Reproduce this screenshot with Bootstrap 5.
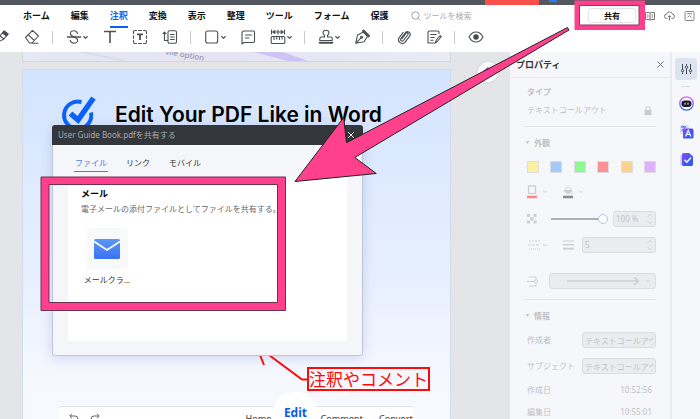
<!DOCTYPE html>
<html lang="ja">
<head>
<meta charset="utf-8">
<meta name="viewport" content="width=device-width, initial-scale=1">
<title>User Guide Book.pdf</title>
<link href="https://cdn.jsdelivr.net/npm/bootstrap@5.3.0/dist/css/bootstrap.min.css" rel="stylesheet">
<style>
body{font-family:"Noto Sans","Noto Sans CJK JP",sans-serif;font-size:8px;line-height:12px;color:#222;background:#fff}
svg{display:block;flex:none}
button{background:none;border:0;padding:0;color:inherit;line-height:inherit;display:flex;align-items:center}
a{text-decoration:none;color:inherit}
.ico{fill:none;stroke:#4c4f54;stroke-width:1.1;stroke-linecap:round;stroke-linejoin:round}
.strip{height:5px;background:#535760;padding-left:485px;gap:10px}
.strip-red{width:54px;background:#fb4f4b}
.strip-blue{width:8px;background:#2a7bf6;height:2px}
.menubar{height:21px;padding:0 5px 0 23px}
.menu-tabs{gap:21px;font-size:9px;font-weight:700;color:#111}
.menu-tabs a{height:20px;line-height:20px;white-space:nowrap}
.menu-tabs a.active{color:#0a62f5;box-shadow:0 2px #0a62f5}
.finder{margin-left:22px;gap:3px;color:#a4a6aa}
.finder input{border:0;padding:0;width:54px;font-size:8px;background:none;outline:0}
.finder input::placeholder{color:#a9abaf;opacity:1}
.share-btn{width:48px;height:15px;border:1px solid #e3e4e8;border-radius:3px;font-size:8px;font-weight:700;color:#111;background:#fff}
.top-icons{gap:9px;margin-left:9px}
.toolbar-row{height:26px;gap:14px;margin-left:-6px;padding-bottom:4px}
.toolbar-row button{gap:1px}
.vsep{width:1px;height:13px;background:#c9cacd;margin:0 -1px 0 -2px;flex:none}
.workspace{background:#e4e5e9;padding:0 59px 0 22px}
.page-prev{height:10px;background:linear-gradient(90deg,#e5e9f3,#e5e3f4 45%,#e9ebf4);border:1px solid #d5d8e2;border-top:0}
.page-main{margin-top:7px;background:linear-gradient(#d3e4fe,#e8f0ff 62%,#f6f8fe 90%,#f8f9fe);border:1px solid #d3dcec;border-bottom:0}
.hero{padding:25px 0 0 37px;gap:18px}
.hero h1{font:600 21px/40px Inter,sans-serif;color:#000;margin:0;white-space:nowrap}
.doc-bar{margin:0 37px 0 36px;height:13px;background:#fff;border-radius:4px 4px 0 0;border-top:1px solid #dfe3ee;font:500 9px/24px "Noto Sans",sans-serif;color:#555}
.doc-hist{gap:11px;padding:6px 0 0 10px}
.doc-nav{height:12px}
.doc-edit{width:46px;height:46px;border-radius:50%;background:#fff;color:#0a5cf0;font:700 12px/26px "Noto Sans",sans-serif;margin:-15px 2px 0 1px;padding-top:8px;justify-content:center;align-items:flex-start}
.callout-note{left:307px;top:367px;border:2px solid #ff0a0a;color:#ff0a0a;font:17px/20px "Noto Sans CJK JP",sans-serif;white-space:nowrap}
.overlay{left:0;top:0;pointer-events:none}
.ai-btn{left:478px;top:62px;width:20px;height:20px;border-radius:50%;background:#fff;box-shadow:0 0 3px #c9ccd5;justify-content:center}
.share-dialog{left:52px;top:125px;width:311px;background:#f5f6fa;border:1px solid #bfc5d6;border-radius:3px;box-shadow:0 2px 12px rgba(70,90,160,.2)}
.dialog-head{height:20px;margin:-1px -1px 0;background:#33373b;color:#a7a9ac;padding:0 8px 0 6px;border-radius:3px 3px 0 0}
.dialog-tabs{gap:17px;padding:9px 21px 0}
.dialog-tabs a{height:17px;line-height:17px;color:#333;padding:0 1px}
.dialog-tabs a.active{color:#3b7ff5;box-shadow:0 1px #3b7ff5}
.share-sheet{margin:6px 15px 14px;padding:10px 13px 0;background:#fff;border-radius:3px;height:164px}
.share-sheet h2{font-size:9px;line-height:14px;font-weight:700;margin:0;color:#000}
.share-sheet p{color:#66686c;line-height:16px;margin:0 0 11px;white-space:nowrap}
.mail-tile{width:52px;flex-direction:column;gap:5px;color:#333}
.mail-pic{width:41px;height:41px;background:#f8f9fa;border-radius:4px}
.props{width:162px;background:#f6f7fb;border-right:2px solid #eaebf1;color:#bfc0c5}
.props-head{height:26px;border-bottom:1px solid #e9eaf0;padding:0 6px;font-size:9px;font-weight:700;color:#333}
.props-body{padding:8px 14px 0 17px}
.gap-s{margin-top:6px}
.gap-m{margin-top:10px}
.gap-l{margin-top:12px}
.gap-xl{margin-top:20px}
.rule{height:1px;background:#e4e5ea;margin-left:-3px}
.sect{gap:4px;font-weight:700;margin-left:-2px}
.swatch{width:12px;height:12px;border:1px solid #dcdde3;padding:0}
.sw1{background:#fbf1a0}.sw2{background:#a5c8fd}.sw3{background:#90f794}.sw4{background:#fb9192}.sw5{background:#fcd28f}.sw6{background:#dfb0fc}
.pale{fill:none;stroke:#cdced3;stroke-width:1}
.field{background:#ebecf0;border:1px solid #dbdce1;border-radius:3px;height:16px;color:#c3c4c9;font-size:8px;line-height:12px;padding:0 2px;width:74px}
.field.narrow{width:43px}
.field input{border:0;background:none;outline:0;padding:0;color:inherit;min-width:0;width:28px}
input.field{outline:0}
.arrow-select{position:relative;width:107px}
.arrow-select select{appearance:none;width:100%;height:16px;background:#ebecf0;border:1px solid #dbdce1;border-radius:3px;color:transparent;font-size:8px;display:block}
.arrow-select svg{position:absolute;left:18px;top:2px;pointer-events:none}
.opacity-range{appearance:none;width:57px;height:12px;background:none;margin:0}
.opacity-range::-webkit-slider-runnable-track{height:2px;background:#aeb0b4}
.opacity-range::-webkit-slider-thumb{appearance:none;width:10px;height:10px;margin-top:-4px;border-radius:50%;background:#fff;border:1px solid #a9c7f8}
.rail{width:28px;background:#f6f7fb;padding-top:6px}
.rail-on{width:22px;height:22px;border-radius:3px;background:#dde4f0;justify-content:center}
.rail-line{width:8px;height:1px;background:#dadce2;margin:6px 0 9px}
.rail-tools{gap:13px}
</style>
<script src="https://cdn.jsdelivr.net/npm/bootstrap@5.3.0/dist/js/bootstrap.bundle.min.js"></script>
</head>
<body class="vh-100 overflow-hidden d-flex flex-column position-relative">
<div class="strip d-flex flex-shrink-0"><div class="strip-red"></div><div class="strip-blue"></div></div>

<header class="flex-shrink-0">
  <div class="menubar d-flex align-items-center">
    <nav class="menu-tabs d-flex">
      <a href="#">ホーム</a><a href="#">編集</a><a href="#" class="active">注釈</a><a href="#">変換</a><a href="#">表示</a><a href="#">整理</a><a href="#">ツール</a><a href="#">フォーム</a><a href="#">保護</a>
    </nav>
    <label class="finder d-flex align-items-center">
      <svg width="10" height="10" fill="none" stroke="#a4a6aa"><circle cx="4.500" cy="4.500" r="3.700"/><path d="M7.200 7.200 9.500 9.500"/></svg>
      <input type="text" placeholder="ツールを検索" aria-label="ツールを検索">
    </label>
    <button class="share-btn ms-auto justify-content-center">共有</button>
    <div class="top-icons d-flex align-items-center">
      <button aria-label="ガイド"><svg width="10" height="10" fill="none" stroke="#777"><path d="M.5 1.500h3.500l1 .8 1-.8h3.500v7H6l-1 .8-1-.8H.5zM5 2.500v6.500M2 4h1.500M2 6h1.500M6.500 4H8M6.500 6H8"/></svg></button>
      <button aria-label="アップロード"><svg width="11" height="10" fill="none" stroke="#777"><path d="M3.500 7.500H2.800a2.200 2.200 0 0 1-.2-4.400 3 3 0 0 1 5.800 0 2.200 2.200 0 0 1-.2 4.400h-.7M5.500 9.500V4.700M3.900 6.200l1.600-1.600 1.600 1.600"/></svg></button>
      <button aria-label="折りたたむ"><svg width="11" height="10" fill="none" stroke="#888"><rect x="1" y=".5" width="9" height="9" rx="1"/><path d="M3 2.700h5M3.500 6.500l2-2 2 2"/></svg></button>
    </div>
  </div>
  <div class="toolbar-row d-flex align-items-center">
    <button aria-label="ハイライト"><svg class="ico" width="16" height="16"><path d="M3 13.500 6 7l4-5 4 3-4 5zM6 7l4 3"/><path d="m10 2 4 3-1.500 2-4-3z" fill="#45484d"/></svg></button>
    <button aria-label="消しゴム"><svg class="ico" width="16" height="16"><path d="M1.500 8.500 8.500 1.300 14.500 7l-6.500 7H5.500zM4.300 5.800l6 5.700M8 14.200h6"/></svg></button>
    <span class="vsep"></span>
    <button aria-label="取り消し線"><svg class="ico" width="16" height="16"><path d="M1.500 8h13" stroke-width="1.600"/><path d="M11.500 4.500C11 2.500 9.500 1.700 8 1.700c-2.200 0-3.600 1.300-3.600 2.800C4.400 6 5.500 7 8 8c2.300 1 3.700 1.800 3.700 3.300S10 14.200 8 14.200c-2 0-3.500-1-3.800-3"/></svg><svg class="ico" width="5" height="5"><path d="M.7 1.500 2.500 3.300 4.300 1.500"/></svg></button>
    <button aria-label="テキスト"><svg class="ico" width="16" height="16"><path d="M2 2.500h12M8 3v11" stroke-width="1.600" stroke-linecap="butt"/></svg></button>
    <button aria-label="テキストボックス"><svg class="ico" width="16" height="16"><path d="M1.500 4.500V3a1.500 1.500 0 0 1 1.500-1.500h1.500M6.500 1.500h3M11.500 1.500H13A1.500 1.500 0 0 1 14.500 3v1.500M14.500 11.500V13a1.500 1.500 0 0 1-1.500 1.500h-1.500M9.500 14.500h-3M4.500 14.500H3A1.500 1.500 0 0 1 1.500 13v-1.500M1.500 6.800v2.400M14.500 6.800v2.400"/><path d="M5 5.300h6M8 5.500V11" stroke-width="1.800" stroke-linecap="butt"/></svg></button>
    <button aria-label="コールアウト"><svg class="ico" width="16" height="16"><path d="M7.500 1.700H13A1.500 1.500 0 0 1 14.500 3.200v9.600a1.500 1.500 0 0 1-1.500 1.500H7.500A1.500 1.500 0 0 1 6 12.800V3.200a1.500 1.500 0 0 1 1.500-1.500zM8.500 5.500h3.700M8.500 8h3.700M8.500 10.500h3.700M5.500 11.500H2.500V3M1 4.700 2.500 3 4 4.700"/></svg></button>
    <span class="vsep"></span>
    <button aria-label="図形"><svg class="ico" width="16" height="16"><rect x="1.700" y="2" width="12" height="12" rx="2"/></svg><svg class="ico" width="5" height="5"><path d="M.7 1.500 2.500 3.300 4.300 1.500"/></svg></button>
    <button aria-label="ノート"><svg class="ico" width="16" height="16"><path d="M4 2h9.500a1 1 0 0 1 1 1v9a1.500 1.500 0 0 1-1.500 1.500H4L2 15V4a2 2 0 0 1 2-2zM5.500 6h6M5.500 9H9"/></svg></button>
    <button aria-label="測定"><svg class="ico" width="16" height="16"><path d="M1.500 1v4M14.500 1v4M8 1v4M2.500 3h11M5 1.500 3 3l2 1.500M11 1.500 13 3l-2 1.500"/><rect x="1.200" y="7.500" width="13.600" height="7" rx="1"/><path d="M4 8v2.500M6.700 8v2M9.400 8v2.500M12 8v2"/></svg><svg class="ico" width="5" height="5"><path d="M.7 1.500 2.500 3.300 4.300 1.500"/></svg></button>
    <span class="vsep"></span>
    <button aria-label="スタンプ"><svg class="ico" width="16" height="16"><path d="M6.500 8V6.500C5.500 5.500 5 4.800 5 3.800A2.900 2.900 0 0 1 8 1.200a2.900 2.900 0 0 1 3 2.600c0 1-.5 1.700-1.500 2.700V8h3.200a1.500 1.500 0 0 1 1.500 1.500V11.500H1.800V9.500A1.500 1.500 0 0 1 3.300 8z"/><path d="M1.700 13.800h12.600" stroke-width="2"/></svg><svg class="ico" width="5" height="5"><path d="M.7 1.500 2.500 3.300 4.300 1.500"/></svg></button>
    <button aria-label="署名"><svg class="ico" width="16" height="16"><path d="M1.700 14.300 3.500 6l6-3 4 4.200-3.300 5.500zM2 14l5-5.200"/><circle cx="7.500" cy="8.300" r="1"/><path d="m9.500 2 5 5" stroke-width="2.800"/></svg></button>
    <span class="vsep"></span>
    <button aria-label="添付"><svg class="ico" width="16" height="16"><path d="m5 9.500 4.500-6a2.800 2.800 0 0 1 4.400 3.300l-5 6.500a3.700 3.700 0 0 1-5.800-4.500l4-5.300M5 9.500a1.600 1.600 0 0 0 2.500 2L12 5.500a1.200 1.200 0 0 0-1.900-1.400L6.200 9.500" stroke-width="1.200"/></svg></button>
    <button aria-label="注釈管理"><svg class="ico" width="16" height="16"><path d="M13 4.500V3a1 1 0 0 0-1-1H3.500a1.500 1.500 0 0 0-1.500 1.500V14h7M4.700 5.500h5.500M4.700 8.500h3.500M4.700 11.200H7M9.500 13.800l.5-2.300 4-5 1.300 1-4 5z"/></svg></button>
    <span class="vsep"></span>
    <button aria-label="表示切替"><svg class="ico" width="16" height="16"><path d="M1 8c3.500-6.700 10.500-6.700 14 0-3.500 6.700-10.500 6.700-14 0z"/><circle cx="8" cy="8" r="2.200" fill="#45484d"/></svg></button>
  </div>
</header>

<main class="d-flex flex-grow-1 overflow-hidden">
  <section class="workspace flex-grow-1 d-flex flex-column overflow-hidden">
    <div class="page-prev flex-shrink-0">
      <svg width="100%" height="9"><path d="M65 0 105 9H98L55 0z" fill="#d8dbe6"/><path d="M230 0h30l25 9h-20z" fill="#cfc3f5"/><text x="142" y="2" font-size="8" fill="#8c8ea3" transform="rotate(10 142 2)">vile option</text></svg>
    </div>
    <article class="page-main flex-grow-1 d-flex flex-column">
      <div class="hero d-flex align-items-start">
        <svg width="37" height="37" fill="none" stroke="#0b62f8" stroke-width="4"><path d="M21.500 7.200A13.600 13.600 0 1 0 31 17.500"/><path d="m10.500 18.500 7.500 6.500L33.500 3" stroke-width="5.500"/></svg>
        <h1>Edit Your PDF Like in Word</h1>
      </div>
      <div class="doc-bar mt-auto d-flex justify-content-between">
        <div class="doc-hist d-flex">
          <svg width="10" height="9" fill="none" stroke="#666"><path d="M3 .8.8 3 3 5.200M1 3h5a3 3 0 0 1 3 3v3"/></svg>
          <svg width="10" height="9" fill="none" stroke="#666"><path d="M7 .8 9.200 3 7 5.200M9 3H4a3 3 0 0 0-3 3v3"/></svg>
        </div>
        <div class="doc-nav d-flex">
          <a href="#">Home</a><a href="#" class="doc-edit d-flex">Edit</a><a href="#" class="me-3">Comment</a><a href="#">Convert</a>
        </div>
      </div>
    </article>
  </section>

  <aside class="props flex-shrink-0">
    <div class="props-head d-flex align-items-center justify-content-between">プロパティ
      <button aria-label="閉じる"><svg width="7" height="7" stroke="#70768c"><path d="m.5.5 6 6M6.500.5l-6 6"/></svg></button></div>
    <div class="props-body">
      <div class="fw-bold">タイプ</div>
      <div class="gap-s d-flex align-items-center justify-content-between pe-1">テキストコールアウト<svg width="8" height="9"><path d="M2 4V2.500a2 2 0 0 1 4 0V4" fill="none" stroke="#c9cacf"/><rect x=".5" y="4" width="7" height="5" fill="#c9cacf"/></svg></div>
      <div class="rule gap-m"></div>
      <div class="sect gap-m d-flex align-items-center"><svg width="5" height="4"><path d="M.5 0h4L2.500 3z" fill="#c6c7cc"/></svg>外観</div>
      <div class="gap-l d-flex justify-content-between">
        <button class="swatch sw1" aria-label="黄"></button><button class="swatch sw2" aria-label="青"></button><button class="swatch sw3" aria-label="緑"></button><button class="swatch sw4" aria-label="赤"></button><button class="swatch sw5" aria-label="橙"></button><button class="swatch sw6" aria-label="紫"></button>
      </div>
      <div class="gap-l d-flex">
        <button class="me-3" aria-label="線の色"><svg class="pale" width="20" height="14"><rect x="1.500" y="1" width="7" height="7.500" stroke-width="1.300"/><path d="M0 12h10" stroke="#fa8585" stroke-width="2.500"/><path d="m16 5.500 2 2 2-2"/></svg></button>
        <button aria-label="塗りの色"><svg class="pale" width="20" height="14"><path d="M1 5.500 5 1.500 9 5.500 5 9z"/><path d="M1 5.500h8L5 9zM9 6.500v3" fill="#cdced3"/><path d="M0 12h10" stroke="#8f8788" stroke-width="2.500"/><path d="m16 5.500 2 2 2-2"/></svg></button>
      </div>
      <div class="gap-l d-flex align-items-center justify-content-between">
        <svg width="10" height="10" fill="#cdced3"><path d="M0 0h3v3H0zM6.500 0h3v3h-3zM3.200 3.200h3.300v3.300H3.200zM0 6.500h3v3H0zM6.500 6.500h3v3h-3z"/></svg>
        <input type="range" class="opacity-range ms-2" min="0" max="100" value="100" aria-label="不透明度">
        <div class="field narrow d-flex align-items-center justify-content-between"><input type="text" value="100 %" aria-label="不透明度の値"><svg class="pale" width="6" height="12"><path d="m1 3.500 2-2 2 2M1 8.500l2 2 2-2"/></svg></div>
      </div>
      <div class="gap-m d-flex align-items-center">
        <button class="me-3" aria-label="線種"><svg class="pale" width="20" height="10"><path d="M2 1h11" stroke-dasharray="2 1"/><path d="M1 5h12" stroke-dasharray="3 1"/><path d="M2 9h11" stroke-dasharray="1 1"/><path d="m16 4 2 2 2-2"/></svg></button>
        <svg class="pale" width="11" height="10"><path d="M0 1h11"/><path d="M0 4.700h11" stroke-width="1.500"/><path d="M0 8.700h11" stroke-width="2"/></svg>
        <div class="field d-flex align-items-center justify-content-between ms-auto"><input type="text" value="5" aria-label="太さ"><svg class="pale" width="6" height="12"><path d="m1 3.500 2-2 2 2M1 8.500l2 2 2-2"/></svg></div>
      </div>
      <div class="gap-xl d-flex align-items-center justify-content-between">
        <svg class="pale" width="12" height="11"><path d="M2 1h7v2.500M2 10h7V7.500M0 5.500h7"/><circle cx="9" cy="5.500" r="1.700"/></svg>
        <div class="arrow-select"><select aria-label="線の終点"><option>矢印</option></select><svg class="pale" width="86" height="12"><path d="M0 6h71M67 2l4.500 4L67 10" stroke-width="1.300"/><path d="m79 5 2 2 2-2"/></svg></div>
      </div>
      <div class="rule gap-m"></div>
      <div class="sect gap-m d-flex align-items-center"><svg width="5" height="4"><path d="M.5 0h4L2.500 3z" fill="#c6c7cc"/></svg>情報</div>
      <div class="gap-m d-flex align-items-center justify-content-between"><label for="author">作成者</label><input id="author" class="field" value="テキストコールアウト"></div>
      <div class="gap-m d-flex align-items-center justify-content-between"><label for="subject">サブジェクト</label><input id="subject" class="field" value="テキストコールアウト"></div>
      <div class="gap-m d-flex justify-content-between pe-1"><span>作成日</span><span>10:52:56</span></div>
      <div class="gap-m d-flex justify-content-between pe-1"><span>編集日</span><span>10:55:01</span></div>
    </div>
  </aside>

  <aside class="rail flex-shrink-0 d-flex flex-column align-items-center">
    <button class="rail-on" aria-label="プロパティ"><svg width="11" height="12" fill="none" stroke="#454b58"><path d="M1.500 1v5M1.500 9.500V11M5.500 1v1.500M5.500 6v5M9.500 1v5M9.500 9.500V11"/><circle cx="1.500" cy="7.700" r="1.200"/><circle cx="5.500" cy="4.200" r="1.200"/><circle cx="9.500" cy="7.700" r="1.200"/></svg></button>
    <div class="rail-line"></div>
    <div class="rail-tools d-flex flex-column">
      <button aria-label="AI"><svg width="15" height="15"><defs><linearGradient id="ring" x1="0" y1="0" x2="0" y2="1"><stop stop-color="#dd62e8"/><stop offset="1" stop-color="#2a62f4"/></linearGradient></defs><circle cx="7.500" cy="7.500" r="6.700" fill="#fff" stroke="url(#ring)" stroke-width="1.300"/><rect x="2.500" y="4.500" width="10" height="6.500" rx="3" fill="#191b2b"/><path d="M6 6.700v2M9 6.700v2" stroke="#fff"/></svg></button>
      <button aria-label="翻訳"><svg width="15" height="15"><defs><linearGradient id="violet" x1="0" y1="0" x2="1" y2="1"><stop stop-color="#9b48f0"/><stop offset=".6" stop-color="#3758f4"/></linearGradient></defs><rect x="1" y="1" width="9" height="9" rx="1.500" fill="#d8dbfb"/><path d="M2 3h5M4.500 2v1M6 3.500 2.500 7" stroke="#3c55f0" fill="none"/><rect x="4" y="4.500" width="10.500" height="10" rx="1.500" fill="url(#violet)"/><path d="m6.500 12.500 2.700-6 2.700 6M7.500 10.500h3.500" stroke="#fff" stroke-width="1.200" fill="none"/></svg></button>
      <button aria-label="チェック"><svg width="15" height="15"><rect x="1" y="3" width="9" height="10.500" rx="1.500" fill="#cfd3fb"/><path d="M4.500 1H10l4 3.500v8a1.500 1.500 0 0 1-1.500 1.500h-8A1.500 1.500 0 0 1 3 12.500v-10A1.500 1.500 0 0 1 4.500 1z" fill="url(#violet)"/><path d="m5.500 7.800 2.300 2.500L12 5.500" stroke="#fff" stroke-width="1.400" fill="none"/></svg></button>
    </div>
  </aside>
</main>

<svg class="overlay position-absolute" width="451" height="400" fill="none" stroke="#ff0a0a" stroke-width="2"><path d="M260 355 264 365M269 355 302 379.500H308"/></svg>
<div class="callout-note position-absolute">注釈やコメント</div>
<button class="ai-btn position-absolute" aria-label="AI アシスタント"><svg width="12" height="12"><path d="M1 5 6 1l5 4-5 3z" fill="#9a4df0"/><path d="m3 8 3-3 5 2-2 4z" fill="#2b67f5"/></svg></button>

<div class="share-dialog position-absolute" role="dialog" aria-label="User Guide Book.pdfを共有する">
  <div class="dialog-head d-flex align-items-center justify-content-between">User Guide Book.pdfを共有する
    <button aria-label="閉じる"><svg width="8" height="8" stroke="#e8e9ea"><path d="m1 1 6 6M7 1 1 7"/></svg></button></div>
  <nav class="dialog-tabs d-flex"><a href="#" class="active">ファイル</a><a href="#">リンク</a><a href="#">モバイル</a></nav>
  <div class="share-sheet">
    <h2>メール</h2>
    <p>電子メールの添付ファイルとしてファイルを共有する。</p>
    <button class="mail-tile">
      <span class="mail-pic d-flex align-items-center justify-content-center"><svg width="26" height="20"><defs><linearGradient id="mail" x1="0" y1="0" x2="0" y2="1"><stop stop-color="#5a97f4"/><stop offset="1" stop-color="#3a72f3"/></linearGradient></defs><rect width="26" height="20" rx="1.500" fill="url(#mail)"/><path d="m0 2.500 13 8.500 13-8.500" fill="none" stroke="#fff" stroke-width="1.700"/></svg></span>
      <span>メールクラ...</span>
    </button>
  </div>
</div>

<svg class="overlay position-absolute" width="700" height="320" fill="none">
  <path d="M41 177H285.500V310.500H41zM49 184.500V302.500H277.500V184.500z" fill="#ff418d" fill-rule="evenodd" stroke="#6b3350"/>
  <path d="M574.500.5H645V30H574.500zM579.500 5.500V25H639V5.500z" fill="#ff418d" fill-rule="evenodd"/>
  <path d="M579.500 5.500H639V25H579.500z" stroke="#8a3a5c"/>
  <path d="M295 181.500 343.700 117.500 346.500 142.700 567.500 27.500 569 30 354.800 157.500 376.300 173.500z" fill="#ff418d" stroke="#222" stroke-linejoin="round"/>
</svg>
</body>
</html>
